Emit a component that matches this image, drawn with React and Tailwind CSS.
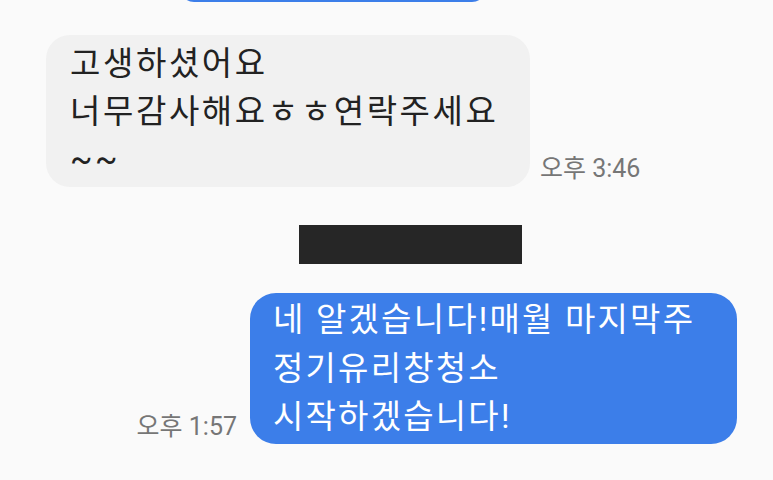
import React from "react";

const font = { fontFamily: '"Roboto", "Noto Sans CJK KR", sans-serif' };

function Time({ children, className = "" }) {
  return (
    <span className={`text-[25px] leading-none text-[#767676] whitespace-nowrap ${className}`}>
      {children}
    </span>
  );
}

export default function App() {
  return (
    <div className="w-[773px] h-[480px] overflow-hidden bg-[#fafafa]" style={font}>
      {/* previous sent bubble, mostly scrolled off */}
      <div className="ml-[180px] w-[306px] h-[28px] -mt-[26px] rounded-[26px] bg-[#3c7ee9]" />

      {/* received */}
      <div className="mt-[33px] ml-[46px] flex items-end gap-[10px]">
        <div className="w-[484px] rounded-[24px] bg-[#f1f1f1] pl-[24px] pt-[5px] pb-[3px] text-[33px] tracking-[2.6px] leading-[48px] text-[#222]">
          고생하셨어요
          <br />
          너무감사해요ㅎㅎ연락주세요
          <br />
          ~~
        </div>
        <Time className="mb-[6px]">오후 3:46</Time>
      </div>

      {/* redacted */}
      <div className="mt-[38px] ml-[299px] w-[223px] h-[39px] bg-[#262626]" />

      {/* sent */}
      <div className="mt-[29px] pr-[36px] flex justify-end items-end gap-[13px]">
        <Time className="mb-[5px]">오후 1:57</Time>
        <div className="w-[487px] rounded-[26px] bg-[#3c7ee9] pl-[23px] pt-[3px] pb-[2px] text-[33px] tracking-[2.2px] leading-[48.5px] text-white">
          네 알겠습니다!매월 마지막주
          <br />
          정기유리창청소
          <br />
          시작하겠습니다!
        </div>
      </div>
    </div>
  );
}
